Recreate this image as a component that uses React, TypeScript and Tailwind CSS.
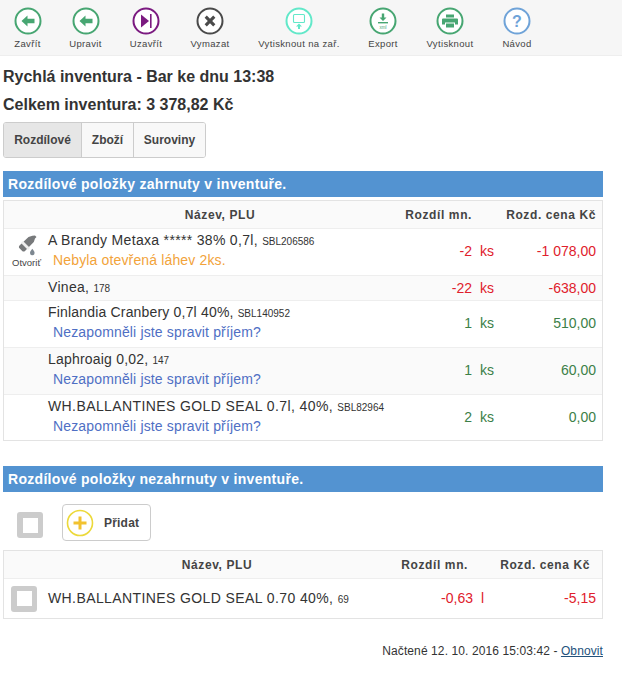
import type { ReactNode } from "react";

function Ring({ color, children }: { color: string; children: ReactNode }) {
  return (
    <svg width="28" height="28" viewBox="0 0 28 28" className="block">
      <circle cx="14" cy="14" r="12.5" fill="#fff" stroke={color} strokeWidth="2" />
      {children}
    </svg>
  );
}

const toolbar: { label: string; width: string; icon: ReactNode }[] = [
  {
    label: "Zavřít",
    width: "w-[55px]",
    icon: (
      <Ring color="#47a672">
        <path d="M7.5 14l6-5.6v3.4h7v4.4h-7v3.4z" fill="#47a672" />
      </Ring>
    ),
  },
  {
    label: "Upravit",
    width: "w-[61px]",
    icon: (
      <Ring color="#47a672">
        <path d="M7.5 14l6-5.6v3.4h7v4.4h-7v3.4z" fill="#47a672" />
      </Ring>
    ),
  },
  {
    label: "Uzavřít",
    width: "w-[60px]",
    icon: (
      <Ring color="#7b1a80">
        <path d="M9 7.5l8 6.5-8 6.5z" fill="#7b1a80" />
        <rect x="18" y="7" width="1.6" height="14" fill="#7b1a80" />
      </Ring>
    ),
  },
  {
    label: "Vymazat",
    width: "w-[68px]",
    icon: (
      <Ring color="#4a4a4a">
        <path d="M10.8 8.6L14 11.8l3.2-3.2 2.2 2.2-3.2 3.2 3.2 3.2-2.2 2.2-3.2-3.2-3.2 3.2-2.2-2.2 3.2-3.2-3.2-3.2z" fill="#4a4a4a" />
      </Ring>
    ),
  },
  {
    label: "Vytisknout na zař.",
    width: "w-[110px]",
    icon: (
      <Ring color="#62e8c9">
        <rect x="8.5" y="7.5" width="11" height="8" rx="1" fill="none" stroke="#62e8c9" strokeWidth="1.1" />
        <path d="M14 16.5l3 3h-2v2.5h-2v-2.5h-2z" fill="#62e8c9" />
      </Ring>
    ),
  },
  {
    label: "Export",
    width: "w-[58px]",
    icon: (
      <Ring color="#47a672">
        <path d="M12.8 6.5h2.4v4h2.3L14 14l-3.5-3.5h2.3z" fill="#47a672" />
        <rect x="9" y="15" width="10" height="1.4" fill="#47a672" />
        <text x="14" y="21.5" textAnchor="middle" fontSize="4.5" fill="#47a672" fontFamily="Liberation Sans, sans-serif">xml</text>
      </Ring>
    ),
  },
  {
    label: "Vytisknout",
    width: "w-[76px]",
    icon: (
      <Ring color="#47a672">
        <rect x="10" y="7.5" width="8" height="3" fill="#47a672" />
        <path d="M7 11.5h14a1 1 0 0 1 1 1v5h-3v-2H9v2H6v-5a1 1 0 0 1 1-1z" fill="#47a672" />
        <rect x="10" y="16.5" width="8" height="4" fill="#47a672" />
      </Ring>
    ),
  },
  {
    label: "Návod",
    width: "w-[58px]",
    icon: (
      <Ring color="#6fa3d8">
        <text x="14" y="19.5" textAnchor="middle" fontSize="16" fontWeight="700" fill="#6fa3d8" fontFamily="Liberation Sans, sans-serif">?</text>
      </Ring>
    ),
  },
];

function Bottle() {
  return (
    <svg width="24" height="24" viewBox="0 0 24 24" className="block">
      <path d="M20 2.5l1.5 1.5-1.5 1.6-1.2 3.4-8.8 9c-.8.8-2 .8-2.8 0l-2.7-2.7c-.8-.8-.8-2 0-2.8l9-8.6 3.9-1.2z" fill="#77797b" />
      <path d="M8 8l7 7-2 2-7-7z" fill="#eeeeee" />
      <path d="M15 20c0-1.5 1.4-3 2.3-4.2.9 1.2 2.3 2.7 2.3 4.2a2.3 2.3 0 0 1-4.6 0z" fill="#7d8790" />
    </svg>
  );
}

function Checkbox() {
  return (
    <div className="flex h-[26px] w-[26px] items-center justify-center rounded-[3px] bg-[#cccccc]">
      <div className="h-[15px] w-[15px] bg-white" />
    </div>
  );
}

function Heading({ children }: { children: ReactNode }) {
  return (
    <div className="flex h-[26px] items-center bg-[#5393d1] pl-[5px] text-[14px] font-bold tracking-[0.3px] text-white">
      {children}
    </div>
  );
}

type Row = {
  name: string;
  plu: string;
  nameClass: string;
  note?: string;
  noteColor?: string;
  qty: string;
  unit: string;
  price: string;
  color: string;
  height: string;
  icon?: ReactNode;
  striped?: boolean;
};

const RED = "text-[#e0202c]";
const GREEN = "text-[#3c8048]";
const BLUE_NOTE = "text-[#4f6fc4] tracking-[0.15px]";
const ORANGE_NOTE = "text-[#f2a33a] tracking-[0.15px]";

const rows: Row[] = [
  {
    name: "A Brandy Metaxa ***** 38% 0,7l,",
    plu: "SBL206586",
    nameClass: "tracking-[0.32px]",
    note: "Nebyla otevřená láhev 2ks.",
    noteColor: ORANGE_NOTE,
    qty: "-2",
    unit: "ks",
    price: "-1 078,00",
    color: RED,
    height: "h-[47px] pb-[2px]",
    icon: (
      <div className="flex flex-col items-center">
        <Bottle />
        <span className="text-[9.5px] leading-[12px] text-[#444]">Otvoriť</span>
      </div>
    ),
  },
  { name: "Vinea,", plu: "178", nameClass: "tracking-[0.3px]", qty: "-22", unit: "ks", price: "-638,00", color: RED, height: "h-[25px]", striped: true },
  {
    name: "Finlandia Cranbery 0,7l 40%,",
    plu: "SBL140952",
    nameClass: "tracking-[0.18px]",
    note: "Nezapomněli jste spravit příjem?",
    noteColor: BLUE_NOTE,
    qty: "1",
    unit: "ks",
    price: "510,00",
    color: GREEN,
    height: "h-[47px] pb-[2px]",
  },
  {
    name: "Laphroaig 0,02,",
    plu: "147",
    nameClass: "tracking-[0.2px]",
    note: "Nezapomněli jste spravit příjem?",
    noteColor: BLUE_NOTE,
    qty: "1",
    unit: "ks",
    price: "60,00",
    color: GREEN,
    height: "h-[47px] pb-[2px]",
    striped: true,
  },
  {
    name: "WH.BALLANTINES GOLD SEAL 0.7l, 40%,",
    plu: "SBL82964",
    nameClass: "tracking-[0.4px]",
    note: "Nezapomněli jste spravit příjem?",
    noteColor: BLUE_NOTE,
    qty: "2",
    unit: "ks",
    price: "0,00",
    color: GREEN,
    height: "h-[46px]",
  },
];

export default function App() {
  return (
    <div className="h-[673px] w-[622px] overflow-hidden bg-white font-['Liberation_Sans',Arial,sans-serif] text-[#333]">
      <div className="flex h-[56px] items-start border-b border-[#eeeeee] bg-[#f6f6f6] pt-[7px]">
        {toolbar.map((item) => (
          <div key={item.label + item.width} className={`flex shrink-0 flex-col items-center ${item.width}`}>
            {item.icon}
            <span className="mt-[3px] whitespace-nowrap text-[9.5px] leading-[12px] tracking-[0.35px] text-[#444]">
              {item.label}
            </span>
          </div>
        ))}
      </div>

      <div className="flex flex-col px-[3px] pr-[19px]">
        <h1 className="mt-[11px] text-[16px] leading-[20px] font-bold">Rychlá inventura - Bar ke dnu 13:38</h1>
        <h2 className="mt-[8px] text-[16px] leading-[20px] font-bold">Celkem inventura: 3 378,82 Kč</h2>

        <div className="mt-[7px] flex h-[36px] w-[203px] overflow-hidden rounded-[3px] border border-[#cccccc] text-[12px] font-bold text-[#444]">
          <div className="flex w-[78px] items-center justify-center border-r border-[#cccccc] bg-[#e6e6e6]">Rozdílové</div>
          <div className="flex w-[52px] items-center justify-center border-r border-[#cccccc] bg-[#f8f8f8]">Zboží</div>
          <div className="flex flex-1 items-center justify-center bg-[#f8f8f8]">Suroviny</div>
        </div>

        <div className="mt-[13px]">
          <Heading>Rozdílové položky zahrnuty v inventuře.</Heading>
        </div>

        <div className="mt-[3px] border border-[#e3e3e3] text-[14px]">
          <div className="grid h-[27px] grid-cols-[432px_36px_1fr] items-center bg-[#fafafa] text-[12px] font-bold tracking-[0.6px] text-[#444]">
            <span className="text-center">Název, PLU</span>
            <span className="justify-self-end whitespace-nowrap">Rozdíl mn.</span>
            <span className="pr-[6px] text-right">Rozd. cena Kč</span>
          </div>
          {rows.map((row) => (
            <div
              key={row.name}
              className={`flex items-center border-t border-[#eeeeee] ${row.height} ${row.striped ? "bg-[#fafafa]" : "bg-white"}`}
            >
              <div className="flex w-[44px] shrink-0 justify-center pl-[1px]">{row.icon}</div>
              <div className={`min-w-0 flex-1 leading-[19px] ${row.note ? "pb-[2px]" : ""}`}>
                <div className={`whitespace-nowrap ${row.nameClass}`}>
                  {row.name} <span className="text-[10px] tracking-normal">{row.plu}</span>
                </div>
                {row.note && <div className={`pl-[5px] ${row.noteColor}`}>{row.note}</div>}
              </div>
              <div className={`w-[55px] shrink-0 text-right ${row.color}`}>{row.qty}</div>
              <div className={`w-[28px] shrink-0 pl-[8px] ${row.color}`}>{row.unit}</div>
              <div className={`w-[102px] shrink-0 pr-[6px] text-right ${row.color}`}>{row.price}</div>
            </div>
          ))}
        </div>

        <div className="mt-[25px]">
          <Heading>Rozdílové položky nezahrnuty v inventuře.</Heading>
        </div>

        <div className="mt-[12px] flex items-start gap-[19px] pl-[14px]">
          <div className="mt-[8px]">
            <Checkbox />
          </div>
          <div className="flex h-[37px] w-[89px] items-center gap-[10px] rounded-[4px] border border-[#cccccc] pl-[3px]">
            <svg width="28" height="28" viewBox="0 0 28 28" className="block">
              <circle cx="14" cy="14" r="12.5" fill="#fff" stroke="#ecd93a" strokeWidth="1.6" />
              <path d="M12.5 7.5h3v5h5v3h-5v5h-3v-5h-5v-3h5z" fill="#f2c230" />
            </svg>
            <span className="text-[12px] font-bold tracking-[0.2px] text-[#444]">Přidat</span>
          </div>
        </div>

        <div className="mt-[9px] border border-[#e3e3e3] text-[14px]">
          <div className="grid h-[27px] grid-cols-[426px_38px_1fr] items-center bg-[#fafafa] text-[12px] font-bold tracking-[0.6px] text-[#444]">
            <span className="text-center">Název, PLU</span>
            <span className="justify-self-end whitespace-nowrap">Rozdíl mn.</span>
            <span className="pr-[12px] text-right">Rozd. cena Kč</span>
          </div>
          <div className="flex h-[40px] items-center border-t border-[#eeeeee]">
            <div className="w-[44px] shrink-0 pl-[7px]">
              <Checkbox />
            </div>
            <div className="min-w-0 flex-1 whitespace-nowrap tracking-[0.4px]">
              WH.BALLANTINES GOLD SEAL 0.70 40%, <span className="text-[10px] tracking-normal">69</span>
            </div>
            <div className={`w-[76px] shrink-0 text-right ${RED}`}>-0,63</div>
            <div className={`w-[16px] shrink-0 pl-[8px] ${RED}`}>l</div>
            <div className={`w-[113px] shrink-0 pr-[6px] text-right ${RED}`}>-5,15</div>
          </div>
        </div>

        <div className="mt-[25px] text-right text-[12px] leading-[14px] tracking-[0.1px]">
          Načtené 12. 10. 2016 15:03:42 - <span className="text-[#23527c] underline">Obnovit</span>
        </div>
      </div>
    </div>
  );
}
